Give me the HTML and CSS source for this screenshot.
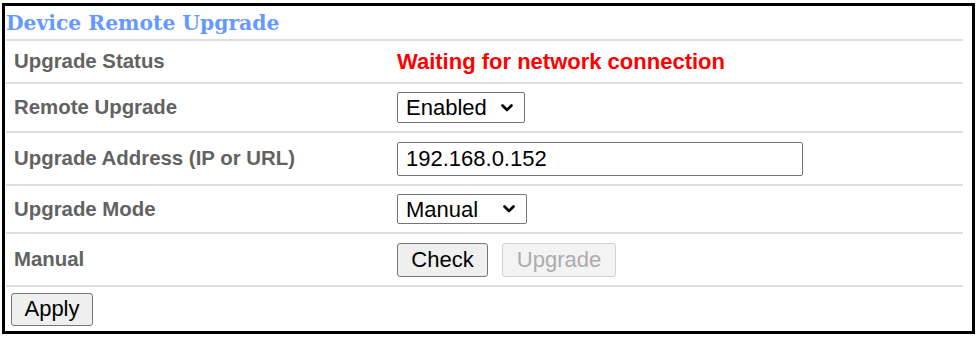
FILE: index.html
```html
<!DOCTYPE html>
<html>
<head>
<meta charset="utf-8">
<link rel="stylesheet" href="styles.css">
</head>
<body>
<div class="panel">
  <div class="table">
    <div class="row head"><div class="title">Device Remote Upgrade</div></div>
    <div class="row r-status">
      <div class="label">Upgrade Status</div>
      <div class="value status">Waiting for network connection</div>
    </div>
    <div class="row r-remote">
      <div class="label">Remote Upgrade</div>
      <div class="value">
        <span class="select-wrap sel-enabled">
          <select class="select"><option>Enabled</option><option>Disabled</option></select>
          <svg class="chev" viewBox="0 0 12 8" width="12" height="8"><path d="M1.5 1.5 L6 6 L10.5 1.5" fill="none" stroke="#000" stroke-width="2.6" stroke-linecap="round" stroke-linejoin="round"/></svg>
        </span>
      </div>
    </div>
    <div class="row r-address">
      <div class="label">Upgrade Address (IP or URL)</div>
      <div class="value"><input class="text-input" type="text" value="192.168.0.152"></div>
    </div>
    <div class="row r-mode">
      <div class="label">Upgrade Mode</div>
      <div class="value">
        <span class="select-wrap sel-mode">
          <select class="select"><option>Manual</option><option>Auto</option></select>
          <svg class="chev" viewBox="0 0 12 8" width="12" height="8"><path d="M1.5 1.5 L6 6 L10.5 1.5" fill="none" stroke="#000" stroke-width="2.6" stroke-linecap="round" stroke-linejoin="round"/></svg>
        </span>
      </div>
    </div>
    <div class="row r-manual">
      <div class="label">Manual</div>
      <div class="value buttons">
        <button class="btn btn-check">Check</button>
        <button class="btn btn-upgrade" disabled>Upgrade</button>
      </div>
    </div>
    <div class="row-apply">
      <button class="btn btn-apply">Apply</button>
    </div>
  </div>
</div>
</body>
</html>
```

FILE: styles.css
```css
html, body {
  margin: 0;
  padding: 0;
  background: #fff;
}

.panel {
  box-sizing: border-box;
  margin: 3px 2px 0 2px;
  height: 331px;
  border: 3px solid #000;
  font-family: "Liberation Sans", Arial, sans-serif;
}

.table {
  margin: 0 9px 0 1px;
}

.row {
  display: grid;
  grid-template-columns: 391px 1fr;
  align-items: center;
  border-bottom: 2px solid #dedede;
}

.head { height: 33px; display: flex; }
.r-status { height: 41px; }
.r-remote { height: 47px; }
.r-address { height: 51px; }
.r-mode { height: 46px; }
.r-manual { height: 51px; }

.title {
  font-family: "DejaVu Serif", "Liberation Serif", serif;
  font-weight: bold;
  font-size: 20.3px;
  color: #6699ff;
}

.label {
  padding-left: 8px;
  font-size: 20.4px;
  font-weight: bold;
  color: #626262;
}

.value {
  display: flex;
  align-items: center;
}

.status {
  font-size: 22px;
  font-weight: bold;
  color: #ff0000;
}

.select-wrap {
  position: relative;
  display: inline-block;
}

.select {
  -webkit-appearance: none;
  appearance: none;
  box-sizing: border-box;
  font-family: "Liberation Sans", Arial, sans-serif;
  font-size: 22px;
  color: #000;
  background: #fff;
  border: 1px solid #767676;
  border-radius: 2px;
  padding: 0 0 0 8px;
  margin: 0;
  outline: none;
}

.sel-enabled .select { width: 128px; height: 31px; }
.sel-mode .select { width: 130px; height: 30px; }

.chev {
  position: absolute;
  right: 12px;
  top: 50%;
  margin-top: -4px;
  pointer-events: none;
}

.text-input {
  box-sizing: border-box;
  width: 406px;
  height: 34px;
  margin: 0;
  padding: 0 8px;
  font-family: "Liberation Sans", Arial, sans-serif;
  font-size: 22px;
  color: #000;
  border: 1px solid #767676;
  border-radius: 2px;
  background: #fff;
  outline: none;
}

.buttons {
  gap: 14px;
}

.btn {
  box-sizing: border-box;
  height: 34px;
  margin: 0;
  padding: 0;
  font-family: "Liberation Sans", Arial, sans-serif;
  font-size: 22px;
  color: #000;
  background: #efefef;
  border: 1px solid #767676;
  border-radius: 3px;
}

.btn-check { width: 91px; }

.btn-upgrade {
  width: 114px;
  color: #acacac;
  background: #f3f3f3;
  border-color: #d3d3d3;
}

.row-apply {
  display: flex;
  align-items: center;
  height: 44px;
  padding-left: 5px;
}

.btn-apply {
  width: 82px;
  height: 33px;
}
```
